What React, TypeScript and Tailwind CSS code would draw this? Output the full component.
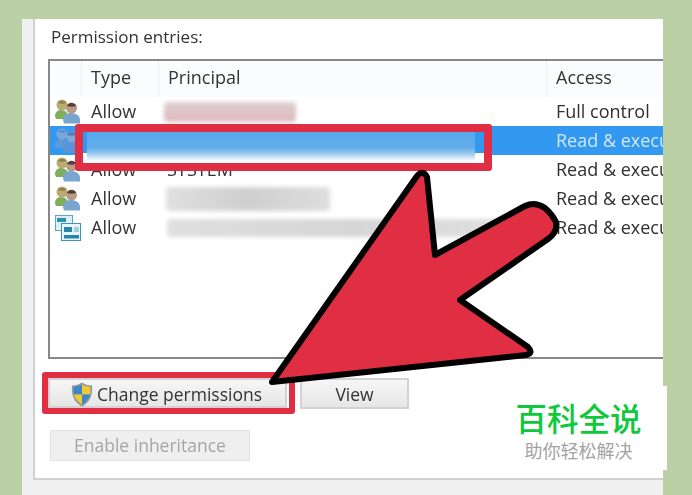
import type { ReactNode } from "react";

function UsersIcon({ selected }: { selected?: boolean }) {
  const c = selected
    ? ["#5f9ad8", "#7ba6d8", "#5a8fcc", "#5b93d6", "#7fa6d4", "#4f7fb8"]
    : ["#7fae5c", "#b9ab72", "#8f8048", "#78a6d0", "#b99a84", "#4d4036"];
  return (
    <svg width="28" height="28" viewBox="0 0 28 28">
      <path d="M1 18c0-4 3-6 6-6s7 2 7 6v3H2z" fill={c[0]} />
      <circle cx="8" cy="7" r="5.500" fill={c[1]} />
      <path d="M4 5c1-3 7-3 8 0-2 1-6 1-8 0z" fill={c[2]} />
      <path d="M9 22c0-5 4-7 8-7s9 2 9 7v3.500H10z" fill={c[3]} />
      <circle cx="17.500" cy="10" r="5.500" fill={c[4]} />
      <path d="M13 8c1-4 8-4 9 0-3 1-6 1-9 0z" fill={c[5]} />
    </svg>
  );
}

function ServerIcon() {
  return (
    <svg width="28" height="28" viewBox="0 0 28 28">
      <rect x="1.500" y="1.500" width="17" height="15" fill="#dff0f5" stroke="#5aa8bd" />
      <rect x="3" y="4" width="9" height="4" fill="#2e8fb5" />
      <rect x="7.500" y="9.500" width="19" height="17" fill="#e8f4f8" stroke="#3f94b0" />
      <rect x="10" y="13" width="8" height="5" fill="#2585ad" />
      <rect x="10" y="21" width="15" height="3.500" fill="#2585ad" />
      <rect x="20" y="13" width="5" height="5" fill="#a5cfdd" />
    </svg>
  );
}

function ShieldIcon() {
  return (
    <svg width="24" height="27" viewBox="0 0 24 26" className="shrink-0">
      <path d="M12 1c3 2 6 3 10 3 1 9-2 17-10 21C4 21 1 13 2 4c4 0 7-1 10-3z" fill="#8d99a3" />
      <path d="M12 3v10H4c-.5-3-.5-5-.3-7.500C7 5 9.500 4.500 12 3z" fill="#3f86c9" />
      <path d="M12 3c2.500 1.500 5 2 8.300 2.500.2 2.500.2 5-.3 7.500h-8z" fill="#f2c92f" />
      <path d="M4 13h8v10c-4-2.500-7-6-8-10z" fill="#f2c92f" />
      <path d="M12 13h8c-1 4-4 7.500-8 10z" fill="#3f86c9" />
    </svg>
  );
}

function Blur({ className }: { className: string }) {
  return <div className={`rounded-sm blur-[2px] ${className}`} />;
}

function Row({ icon, principal, access, accessClass }: { icon: ReactNode; principal?: ReactNode; access: string; accessClass?: string }) {
  return (
    <div className="grid h-[29px] grid-cols-[32px_77px_388px_1fr] items-center whitespace-nowrap">
      <div className="flex justify-center pl-[4px]">{icon}</div>
      <div className="pl-[9px] text-[#333]">Allow</div>
      <div className="pl-[9px]">{principal}</div>
      <div className={`pl-[9px] ${accessClass ?? "text-[#2f2f2f]"}`}>{access}</div>
    </div>
  );
}

export default function App() {
  return (
    <div className="relative h-[495px] w-[692px] overflow-hidden bg-[#bbd0a5] pl-[22px] pr-[29px] pt-[19px] font-['Open_Sans','Noto_Sans_CJK_SC',sans-serif] text-[18px]">
      <div className="h-full bg-[#f0f0f0] pl-[11px]">
        <div className="h-[461px] border-b-2 border-l-2 border-[#d0d0d0] bg-white pl-[13px] blur-[0.5px]">
          <div className="pl-[3px] pt-[5px] text-[17px] leading-[25px] text-[#333]">Permission entries:</div>
          <div className="mt-[10px] h-[300px] overflow-hidden border-y-2 border-l-2 border-[#888]">
            <div className="grid h-[36px] grid-cols-[32px_77px_388px_1fr] items-center bg-[#fbfcfd] text-[#333]">
              <div className="h-full border-r border-[#eef0f3]" />
              <div className="flex h-full items-center border-r border-[#eef0f3] pb-[3px] pl-[9px]">Type</div>
              <div className="flex h-full items-center border-r border-[#eef0f3] pb-[3px] pl-[9px]">Principal</div>
              <div className="pb-[3px] pl-[9px]">Access</div>
            </div>
            <Row icon={<UsersIcon />} access="Full control" principal={<Blur className="-ml-[4px] h-[20px] w-[132px] bg-gradient-to-b from-[#dbcfd0] to-[#e0b8bd]" />} />
            <div className="bg-[#3399f0]">
              <Row icon={<UsersIcon selected />} access="Read & execute" accessClass="text-[#cfe6fb]" />
            </div>
            <Row icon={<UsersIcon />} access="Read & execute" principal={<span className="-ml-[1px] text-[#333]">SYSTEM</span>} />
            <Row icon={<UsersIcon />} access="Read & execute" principal={<Blur className="-ml-[2px] h-[24px] w-[164px] bg-gradient-to-r from-[#e0e0e0] via-[#cfcfcf] to-[#dedede]" />} />
            <Row icon={<ServerIcon />} access="Read & execute" principal={<Blur className="-ml-[1px] h-[18px] w-[376px] bg-gradient-to-r from-[#dfdfdf] via-[#d6d6d6] to-[#e2e2e2]" />} />
          </div>
          <div className="mt-[19px] flex gap-[13px] text-[17.500px] text-[#333]">
            <button className="flex h-[30px] w-[239px] items-center justify-center gap-[3px] border-2 border-[#d2d2d2] bg-gradient-to-b from-[#f6f6f6] to-[#e6e6e6] pr-[3px] pt-[2px]">
              <ShieldIcon />
              Change permissions
            </button>
            <button className="h-[31px] w-[109px] border-2 border-[#d2d2d2] bg-gradient-to-b from-[#f6f6f6] to-[#e6e6e6] pt-[1px]">View</button>
          </div>
          <button className="ml-[2px] mt-[21px] h-[31px] w-[200px] border border-[#e2e2e2] bg-[#efefef] text-[17.500px] text-[#a5a5a8]">Enable inheritance</button>
        </div>
      </div>

      {/* annotation layer */}
      <div className="absolute left-[75px] top-[124px] h-[47px] w-[417px] rounded-[3px] border-[8px] border-[#e02e42] bg-white">
        <div className="h-[21px] bg-[#3399f0]" />
        <div className="absolute left-[4px] top-0 h-[29px] w-[388px] bg-[linear-gradient(to_bottom,#58a8ee_0%,#62ade9_55%,#a8d0f0_78%,#ffffff_100%)]" />
      </div>
      <div className="absolute left-[42px] top-[372px] h-[42px] w-[253px] rounded-[3px] border-[6px] border-[#e02e42]" />
      <svg className="absolute left-0 top-0" width="692" height="495" viewBox="0 0 692 495">
        <path
          d="M272 382 L417 176 Q423 169 427 177 L435 255 L525 206 Q535 201 545 208 Q552 214 556 222 Q558 232 548 239 L460 300 L528 347 Q534 353 526 355 Z"
          fill="#e02e42"
          stroke="#000"
          strokeWidth="6"
          strokeLinejoin="round"
        />
      </svg>

      <div className="absolute left-[500px] top-[386px] flex h-[84px] w-[167px] flex-col items-center bg-white pr-[10px] pt-[14px]">
        <div className="text-[31.500px] font-medium leading-[38px] text-[#0fc83c]">百科全说</div>
        <div className="text-[18px] leading-[26px] text-[#a3a3a3]">助你轻松解决</div>
      </div>
    </div>
  );
}
